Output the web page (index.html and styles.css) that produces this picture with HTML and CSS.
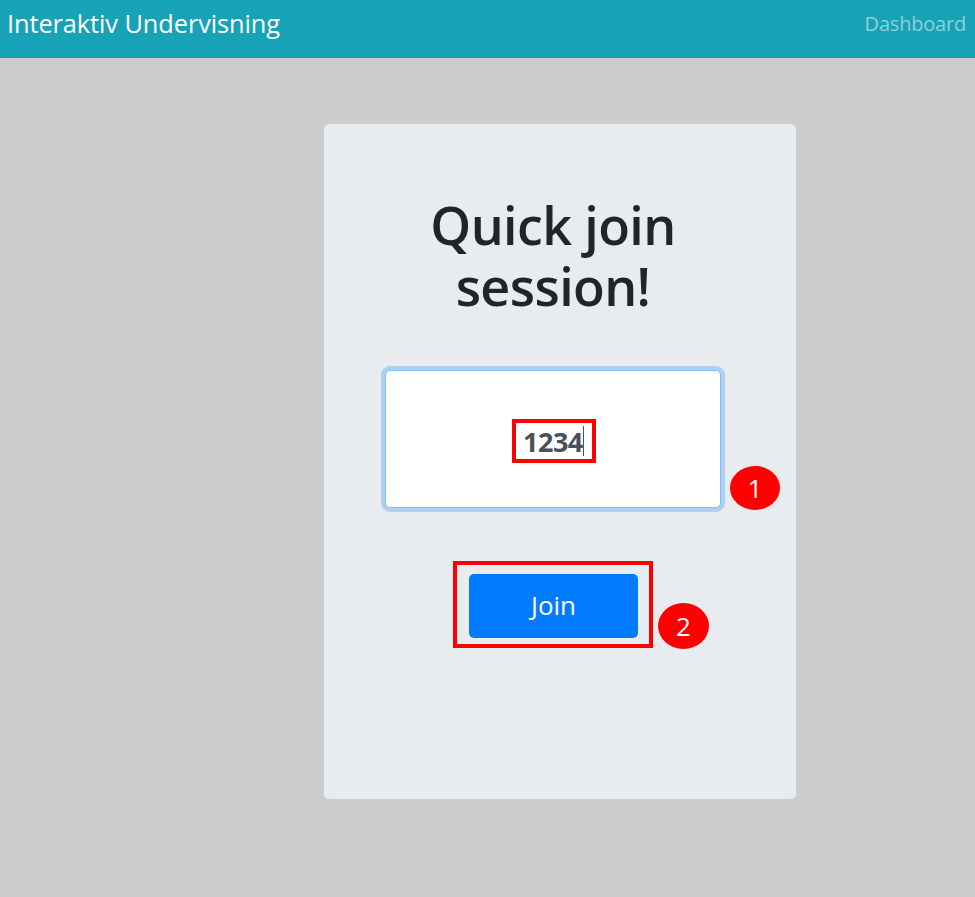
FILE: index.html
```html
<!DOCTYPE html>
<html>
<head>
<meta charset="utf-8">
<link rel="stylesheet" href="styles.css">
</head>
<body>
<nav class="navbar">
  <span class="brand">Interaktiv Undervisning</span>
  <span class="nav-link">Dashboard</span>
</nav>
<main class="page">
  <section class="card">
    <div class="card-inner">
      <h1 class="title">Quick join<br>session!</h1>
      <div class="input-wrap">
        <div class="code-input">
          <span class="mark"><span class="code">1234</span><span class="caret"></span></span>
        </div>
        <span class="badge badge-1">1</span>
      </div>
      <div class="btn-wrap">
        <span class="mark-btn"><button class="btn">Join</button></span>
        <span class="badge badge-2">2</span>
      </div>
    </div>
  </section>
</main>
</body>
</html>
```
FILE: styles.css
```css
* { box-sizing: border-box; }
html, body { margin: 0; padding: 0; }
body {
  background: #cccccc;
  font-family: "Open Sans", "Noto Sans", sans-serif;
  height: 897px;
  overflow: hidden;
}
.navbar {
  height: 58px;
  background: #17a2b8;
  display: flex;
  align-items: center;
  justify-content: space-between;
  padding: 0 9px 0 7px;
}
.brand {
  color: #fff;
  font-size: 25.4px;
  letter-spacing: -0.1px;
  margin-top: -12px;
}
.nav-link {
  color: rgba(255,255,255,0.5);
  font-size: 20px;
  letter-spacing: -0.2px;
  margin-top: -12px;
}
.page {
  padding: 66px 0 0 324px;
}
.card {
  width: 472px;
  height: 675px;
  background: #e9ecef;
  border-radius: 5px;
}
.card-inner {
  padding: 70px 14px 0 0;
  display: flex;
  flex-direction: column;
  align-items: center;
}
.title {
  margin: 0;
  font-size: 52px;
  font-weight: 600;
  line-height: 61px;
  color: #212529;
  text-align: center;
  letter-spacing: -0.6px;
}
.input-wrap {
  position: relative;
  margin-top: 54px;
}
.code-input {
  width: 336px;
  height: 138px;
  background: #fff;
  border: 1px solid #80bdff;
  border-radius: 5px;
  box-shadow: 0 0 0 4px rgba(0,123,255,0.25);
  display: flex;
  align-items: center;
  justify-content: center;
}
.mark {
  display: flex;
  align-items: center;
  width: 84px;
  height: 44px;
  border: 4px solid #ff0000;
  padding-left: 7px;
  margin-left: 2px;
  margin-top: 4px;
}
.code {
  font-weight: 700;
  font-size: 27px;
  color: #495057;
  letter-spacing: -0.5px;
}
.caret {
  display: inline-block;
  width: 1px;
  height: 30px;
  background: #495057;
  margin-left: 0;
}
.badge {
  position: absolute;
  display: flex;
  align-items: center;
  justify-content: center;
  background: #ff0000;
  color: #fff;
  font-size: 26px;
  border-radius: 50%;
}
.badge-1 {
  width: 50px;
  height: 44px;
  left: 345px;
  top: 96px;
}
.btn-wrap {
  position: relative;
  margin-top: 53px;
}
.mark-btn {
  display: block;
  width: 200px;
  height: 87px;
  border: 4px solid #ff0000;
  padding: 9px 0 0 12px;
}
.btn {
  display: block;
  width: 169px;
  height: 64px;
  background: #007bff;
  color: #fff;
  border: none;
  border-radius: 5px;
  font-family: "Open Sans", "Noto Sans", sans-serif;
  font-size: 26px;
  padding: 0 0 2px;
}
.badge-2 {
  width: 51px;
  height: 46px;
  left: 205px;
  top: 42px;
}
```
